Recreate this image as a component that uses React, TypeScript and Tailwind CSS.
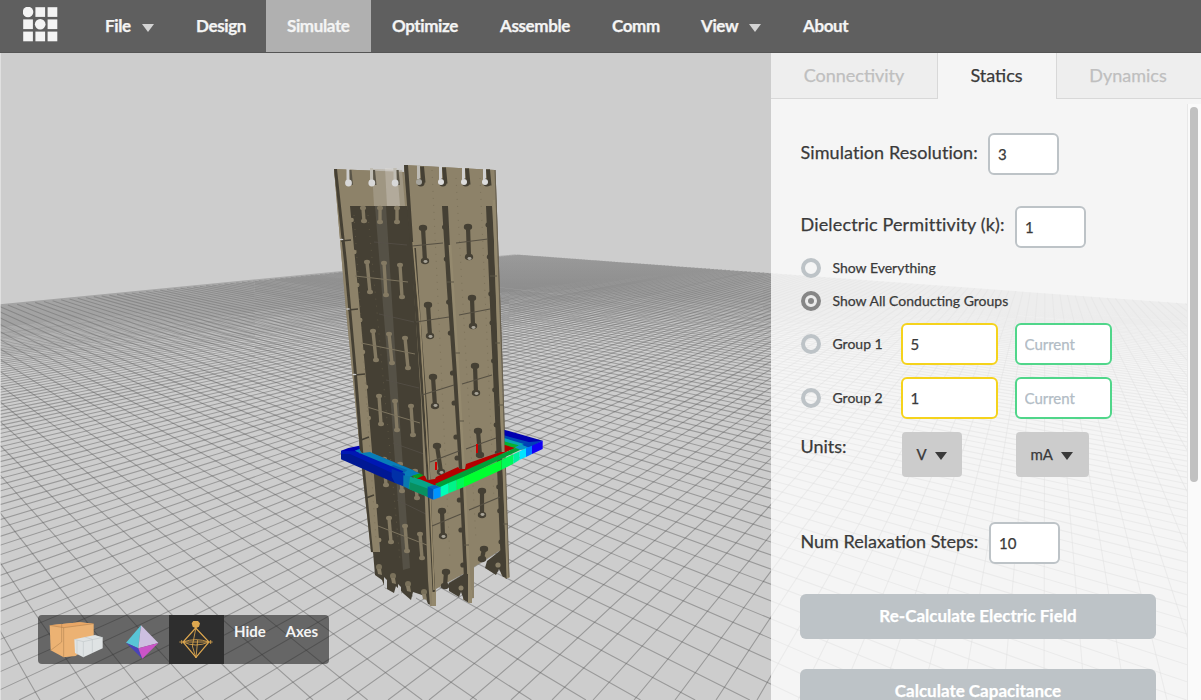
import React from "react";

type Pt = [number, number];

/* ---------- ground grid in perspective ---------- */
const CORNER: Pt = [519, 255];
const VP_RIGHT: Pt = [1045, 203.5];
const VP_LEFT: Pt = [-250, 199];
const BASE = 700;

/* Where the line a-b crosses the line c-d */
function cross(a: Pt, b: Pt, c: Pt, d: Pt): Pt {
  const r: Pt = [b[0] - a[0], b[1] - a[1]];
  const s: Pt = [d[0] - c[0], d[1] - c[1]];
  const den = r[0] * s[1] - r[1] * s[0];
  const t = ((c[0] - a[0]) * s[1] - (c[1] - a[1]) * s[0]) / den;
  return [a[0] + t * r[0], a[1] + t * r[1]];
}

function segment(vp: Pt, edgeVp: Pt, x: number): string {
  const base: Pt = [x, BASE];
  const start = cross(vp, base, CORNER, edgeVp);
  return `M${start[0].toFixed(2)} ${start[1].toFixed(2)}L${x.toFixed(1)} ${BASE}`;
}

function family(vp: Pt, edgeVp: Pt, from: number, to: number, step: number): string {
  const out: string[] = [];
  for (let x = from; x < to; x += step) out.push(segment(vp, edgeVp, x));
  return out.join("");
}

const GRID_A = family(VP_RIGHT, VP_LEFT, 593 - 114 * 41, 1860, 41);
const GRID_B = family(VP_LEFT, VP_RIGHT, 40 - 4 * 54.6, 6640, 54.6);

/* ---------- tower ---------- */
const LIGHT = "#8d8269";
const DARK = "#454034";

function Bone({ a, b, fill, w = 3, r = 3 }: { a: Pt; b: Pt; fill: string; w?: number; r?: number }) {
  return (
    <g fill={fill} stroke={fill}>
      <line x1={a[0]} y1={a[1]} x2={b[0]} y2={b[1]} strokeWidth={w} />
      <ellipse cx={a[0]} cy={a[1]} rx={r} ry={r * 0.75} stroke="none" />
      <ellipse cx={b[0]} cy={b[1]} rx={r} ry={r * 0.75} stroke="none" />
    </g>
  );
}

const backBones: [Pt, Pt][] = [
  [[363, 208], [364, 221]], [[380, 208], [380, 222]], [[397, 208], [397, 222]],
  [[367, 262], [370, 292]], [[384, 263], [386, 295]], [[400, 265], [402, 297]],
  [[373, 331], [376, 360]], [[389, 334], [392, 363]], [[405, 338], [408, 368]],
  [[379, 396], [381, 424]], [[395, 401], [397, 430]], [[411, 406], [413, 435]],
  [[384, 459], [386, 485]], [[400, 464], [402, 491]], [[415, 471], [417, 498]],
  [[389, 518], [391, 542]], [[405, 526], [407, 551]], [[420, 534], [422, 558]],
];

const frontBones: [Pt, Pt][] = [
  [[423, 228], [425, 261]], [[428, 305], [430, 336]], [[433, 377], [435, 406]],
  [[437, 446], [441, 472]], [[442, 511], [443, 536]], [[446, 572], [445, 586]],
  [[468, 227], [469, 257]], [[472, 298], [473, 326]], [[475, 366], [476, 393]],
  [[478, 431], [480, 455]], [[482, 491], [482, 515]], [[484, 549], [482, 559]],
];

const frontHoles: Pt[] = [
  [425, 261], [469, 258], [430, 336], [473, 327], [435, 405], [476, 393], [441, 472], [443, 536], [482, 514],
];

function Tower() {
  return (
    <g>
      {/* back wall */}
      <polygon fill={LIGHT} points="334,169 404,172 410,215 360,215 364,290 373,390 380,554 371,552 360,450 346,310" />
      <polygon fill={DARK} points="334,169 337,169 347,262 357,375 363,450 373,552 371,552 360,450 352,350 344,262" />
      <polygon fill={DARK} points="350,206 408,206 418,300 426,450 434,590 434,606 428,604 425,596 413,592 411,600 404,594 398,588 396,586 394,593 385,588 382,580 375,575 373,552 380,552 376,500 367,390 358,290" />
      <polygon fill="#b5b0a2" opacity="0.45" points="372,169 402,170 405,206 374,206" />
      <polygon fill="#dddcd6" opacity="0.3" points="385,168 397,169 400,206 387,206" />
      <polygon fill="#5b574c" opacity="0.75" points="375,206 386,206 397,380 410,568 403,570 389,380" />
      {[0, 1, 2].map((i) => (
        <g key={i}>
          <path d={`M${346.5 + i * 23.5} 168 v13 h3 v-13z`} fill={i ? "#c0bdb4" : "#cdcdcd"} />
          <path d={`M${349.5 + i * 23.5} 170 h2 l1.500 15 h-3z`} fill="#5a5548" />
          <circle cx={348.5 + i * 23.3} cy={183} r="3.4" fill="#d8d8d8" />
        </g>
      ))}
      {backBones.map(([a, b], i) => (
        <Bone key={i} a={a} b={b} fill="#847a63" w={3.4} />
      ))}
      <g stroke="#7d745f" strokeWidth="1">
        <path d="M355 276L408 282M361 343L415 354M367 407L420 423M378 526L432 547" fill="none" />
      </g>
      <g stroke="#57524a" strokeWidth="0.7">
        <path d="M374 242L407 245M379 314L414 322M386 380L419 388M393 443L424 454M397 500L428 515" fill="none" />
      </g>
      <g stroke={DARK} strokeWidth="1.4">
        <path d="M341 241L351 240M348 310L358 309M355 375L365 374M361 440L369 437M366 498L374 495" fill="none" />
      </g>
      <g fill="#cdcdcd">
        <ellipse cx="341.500" cy="239.500" rx="2" ry="0.8" />
        <ellipse cx="348" cy="309" rx="2" ry="0.8" />
        <ellipse cx="354.500" cy="374.500" rx="2" ry="0.8" />
      </g>
      {[220, 252, 285, 320, 352, 387, 418, 470, 506, 540].map((y) => (
        <circle key={y} cx={350.5 + (y - 206) * 0.086} cy={y} r="2.2" fill={LIGHT} />
      ))}
      {[[379, 572], [393, 581], [408, 589], [424, 597]].map(([x, y]) => (
        <g key={x}>
          <ellipse cx={x} cy={y - 5} rx="3" ry="3" fill="#7a715b" />
          <path d={`M${x - 2} ${y - 3}h4l1 6l-4 -1z`} fill="#877d66" />
        </g>
      ))}
      <path d="M384 577l3 3v9l-3-2zM398 584l3 3v9l-3-2zM413 593l3 3v7l-3-2z" fill="#cacaca" />

      {/* front wall */}
      <polygon fill={LIGHT} points="404,165 495,170 497,240 502,380 505,460 509,577 506,579 501,574 499,551 474,567 474,598 463,600 463,574 436,589 436,606 430,606 428,580 421,400 411,245" />
      <polygon fill={DARK} points="404,165 408,165 413,240 423,380 430,500 435,590 433,600 427,480 421,390 410,244" />
      <path d="M415 248L420 322L427 420L434 590" stroke={DARK} strokeWidth="1.8" fill="none" />
      <path d="M413 242L420 322L429 470L434 590" stroke="#96896c" strokeWidth="1.5" fill="none" />
      <polygon fill={DARK} points="442,206 448,206 452,290 459,390 463,470 468,585 469,603 464,600 464,579 459,470 453,375 447,290" />
      <polygon fill={DARK} points="486,206 492,206 494,240 499,380 502,460 507,579 502,575 500,545 496,440 491,330" />
      <path d="M450 245L459 385L464 475L470 602" stroke="#94896e" strokeWidth="2.8" fill="none" />
      <path d="M494 200L500 380L504 465L508 578" stroke="#93886d" strokeWidth="2.8" fill="none" />
      <path d="M495 170L503 390L509 577" stroke="#696150" strokeWidth="1" fill="none" />
      <path d="M434 592V606" stroke="#93886d" strokeWidth="4" />
      <path d="M470 590V603" stroke="#93886d" strokeWidth="4" />
      <path d="M464 574L449 583V591L459 597L461 592L464 600H468V574zM501 550L487 561L485 568L496 575L499 569L503 577L506 577z" fill={DARK} />
      <circle cx="461" cy="588" r="2.5" fill="#8a8068" />
      <circle cx="498" cy="565" r="2.6" fill="#8a8068" />

      {[420, 442, 465, 486].map((x, i) => (
        <g key={x}>
          <path d={`M${x} ${166.5 + i}h4l1.500 16h-4z`} fill={DARK} />
          <path d={`M${x - 3} ${165 + i}h3v14h-3z`} fill={i ? "#d0d0d0" : "#bdbbb5"} />
          <circle cx={x + 0.8} cy={182.500} r="3.9" fill={DARK} />
          <circle cx={x - 1} cy={182} r="3" fill={i ? "#dddddd" : "#a7a59e"} />
        </g>
      ))}

      {frontBones.map(([a, b], i) => (
        <Bone key={i} a={a} b={b} fill={DARK} w={4.2} r={4.2} />
      ))}
      {frontHoles.map(([x, y], i) => (
        <ellipse key={i} cx={x + 0.5} cy={y + 0.5} rx="2" ry="1.4" fill="#a7a397" />
      ))}
      <path
        d="M412 246L443 243M416 322L449 317M422 395L454 385M430 462L459 451M432 526L461 514M456 243L488 239M459 315L490 309M462 384L492 375M466 449L496 438M469 510L500 497"
        stroke="#565043"
        strokeWidth="1.2"
        fill="none"
      />
      <g fill={DARK}>
        {[227, 259, 302, 333, 373, 403, 437, 458, 500, 530, 565].map((y) => (
          <circle key={y} cx={443.5 + (y - 206) * 0.054} cy={y} r="2.6" />
        ))}
        {[225, 257, 294, 323, 361, 390, 425, 453, 487, 511, 542].map((y) => (
          <circle key={y} cx={487 + (y - 206) * 0.041} cy={y} r="2.4" />
        ))}
      </g>
      <path d="M447 282h7M455 353h5M459 421h5M464 545h5M490 276h7M495 343h5M498 405h5M503 524h5" stroke="#5c5647" strokeWidth="1.2" />
      <g stroke="#6f664f" strokeWidth="0.8" strokeDasharray="1 6" opacity="0.7">
        <path d="M432 170L438 300L450 560M456 178L476 540M480 178L494 500M368 215L400 560M354 215L376 540" fill="none" />
      </g>
    </g>
  );
}

/* Field cross-section, drawn at three times its size */
function Ring() {
  return (
    <g transform="translate(320 380) scale(0.33333)">
      <polygon fill="#0000b0" points="552,149 668,182 640,196 552,168" />
      <polygon fill="#0048b4" points="552,166 640,190 618,206 552,176" />
      <polygon fill="#08a8b0" points="552,174 612,192 600,206 552,186" />
      <polygon fill="#08b030" points="552,184 596,196 575,212 552,204" />
      <polygon fill="#0000b4" points="63,212 85,204 125,196 132,214 105,222" />
      <polygon fill="#087cb8" points="104,212 124,205 310,278 262,293" />
      <polygon fill="#0864a8" points="220,255 262,270 240,288 200,268" />
      <polygon fill="#08a020" points="276,287 312,276 320,290 290,298" />
      <polygon fill="#b40000" points="290,296 345,270 430,240 555,195 585,204 345,318" />
      <polygon fill="#0018b4" points="63,212 105,214 250,274 238,292 63,228" />
      <polygon fill="#001894" points="63,222 90,222 225,283 225,309 63,238" />
      <polygon fill="#0030a8" points="215,266 255,281 250,319 225,309 215,290" />
      <polygon fill="#0878b0" points="250,286 276,291 268,328 250,319" />
      <polygon fill="#08a488" points="270,290 300,298 350,318 326,352 266,326" />
      <polygon fill="#089060" points="270,307 325,326 325,352 268,328" />
      <polygon fill="#00a038" points="345,312 585,204 608,206 362,326" />
      <polygon fill="#0898c8" points="585,201 608,194 630,203 600,210" />
      <polygon fill="#0040b8" points="606,194 630,186 668,182 630,204" />
      <polygon fill="#0868c0" points="323,320 345,315 362,322 340,332" />
      <polygon fill="#0054b4" points="323,320 340,328 340,359 323,352" />
      <polygon fill="#0094ff" points="340,328 362,320 362,351 340,359" />
      <polygon fill="#00ffb8" points="362,320 386,309 386,340 362,351" />
      <polygon fill="#00f488" points="386,309 410,299 410,330 386,340" />
      <polygon fill="#00f858" points="410,299 432,290 432,321 410,330" />
      <polygon fill="#00ff30" points="432,290 545,239 545,269 432,321" />
      <polygon fill="#00fa58" points="545,239 580,223 580,251 545,269" />
      <polygon fill="#00f0a0" points="580,223 599,214 599,239 580,251" />
      <polygon fill="#00e4ff" points="599,214 618,205 618,231 599,239" />
      <polygon fill="#0078ff" points="618,205 636,197 636,222 618,231" />
      <polygon fill="#1200f4" points="636,197 668,182 668,207 636,222" />
    </g>
  );
}

function Scene() {
  return (
    <svg className="absolute inset-0 h-full w-full" viewBox="0 0 1201 700" aria-hidden="true">
      <defs>
        <clipPath id="upper">
          <polygon points="320,100 520,100 505,380 504.500,452 500,452 466,464 465,469 460,469 458,467 436,477 435,479 427,480 425,476 413,470 370,452 362,453 320,400" />
        </clipPath>
        <linearGradient id="haze" gradientUnits="userSpaceOnUse" x1="0" y1="255" x2="0" y2="400">
          <stop offset="0" stopColor="#5c5c5c" stopOpacity="0.26" />
          <stop offset="0.3" stopColor="#5c5c5c" stopOpacity="0.36" />
          <stop offset="1" stopColor="#5c5c5c" stopOpacity="0.46" />
        </linearGradient>
      </defs>
      <rect width="1201" height="700" fill="#cdcdcd" />
      <path d={GRID_A} stroke="url(#haze)" strokeWidth="1.1" fill="none" />
      <path d={GRID_B} stroke="url(#haze)" strokeWidth="1.1" fill="none" />
      <Tower />
      <Ring />
      <g clipPath="url(#upper)">
        <Tower />
      </g>
      <g fill="#d00000">
        <rect x="435" y="462" width="2" height="8" />
        <rect x="476" y="444" width="2" height="9" />
      </g>
      <rect width="1" height="700" fill="#ededed" opacity="0.6" />
    </svg>
  );
}

/* ---------- navigation ---------- */
const Caret = ({ className }: { className: string }) => (
  <svg className={className} viewBox="0 0 12 8" fill="currentColor">
    <path d="M0 0h12L6 8z" />
  </svg>
);

function Logo() {
  const cells = [0, 1, 2].flatMap((r) => [0, 1, 2].map((c) => [r, c]));
  return (
    <svg className="h-[35px] w-[35px]" viewBox="0 0 35 35" fill="#f4f4f4">
      {cells.map(([r, c]) =>
        (r === 0 && c === 0) || (r === 1 && c === 1) ? (
          <circle key={`${r}${c}`} cx={5 + c * 12.2} cy={5 + r * 12.2} r="5.3" />
        ) : (
          <rect key={`${r}${c}`} x={0.2 + c * 12.2} y={0.2 + r * 12.2} width="9.7" height="9.7" />
        ),
      )}
    </svg>
  );
}

const navItems = [
  { label: "File", box: "w-[91px]", menu: true },
  { label: "Design", box: "w-[91px]" },
  { label: "Simulate", box: "w-[105px]", active: true },
  { label: "Optimize", box: "w-[108px]" },
  { label: "Assemble", box: "w-[112px]" },
  { label: "Comm", box: "w-[89px]" },
  { label: "View", box: "w-[102px]", menu: true },
  { label: "About", box: "w-[90px]" },
];

function NavBar() {
  return (
    <header className="flex h-[53px] shrink-0 border-b border-[#555555] bg-[#5f5f5f] text-[17px] font-bold tracking-[-0.38px] text-[#f4f4f4] [-webkit-text-stroke:0.25px]">
      <div className="w-[84px] pt-[7px] pl-[23px]">
        <Logo />
      </div>
      <nav className="flex h-[52px]">
        {navItems.map((n) => (
          <a
            key={n.label}
            className={`flex items-center pl-[21px] ${n.box} ${n.active ? "bg-[#b0b0b0]" : ""}`}
          >
            <span>{n.label}</span>
            {n.menu && <Caret className="mt-[3px] ml-[11px] h-2 w-3 text-[#d4d4d4]" />}
          </a>
        ))}
      </nav>
    </header>
  );
}

/* ---------- side panel ---------- */
function Field({ value, className, placeholder }: { value?: string; className: string; placeholder?: string }) {
  return (
    <input
      defaultValue={value}
      placeholder={placeholder}
      className={`h-[42px] rounded-md border-2 bg-white px-2 text-[15px] text-[#3a3a3a] outline-none placeholder:text-[#b2bcc5] ${className}`}
    />
  );
}

function Radio({ checked = false }: { checked?: boolean }) {
  return (
    <span
      className={`flex size-5 shrink-0 items-center justify-center rounded-full border-4 ${
        checked ? "border-[#868686]" : "border-[#bdc3c7]"
      }`}
    >
      {checked && <span className="size-1.5 rounded-full bg-[#868686]" />}
    </span>
  );
}

function GroupRow({ label, value }: { label: string; value: string }) {
  return (
    <div className="flex h-[54px] shrink-0 items-center">
      <Radio />
      <span className="ml-3 w-[68px] text-sm">{label}</span>
      <Field value={value} className="w-[97px] border-[#f5d31c]" />
      <Field placeholder="Current" className="ml-[17px] w-[97px] border-[#50d68a]" />
    </div>
  );
}

function Panel() {
  return (
    <aside className="flex w-[430px] shrink-0 flex-col bg-white/80 text-[#3a3a3a] [-webkit-text-stroke:0.25px]">
      <div className="flex h-[46px] shrink-0 text-lg">
        <div className="flex w-[167px] justify-center border-r border-b border-[#d8d8d8] bg-[#eeeeee] pt-[8px] text-[#bfbfbf]">
          Connectivity
        </div>
        <div className="flex w-[118px] justify-center pt-[8px] pr-[1px]">Statics</div>
        <div className="flex flex-1 justify-center border-b border-l border-[#d8d8d8] bg-[#eeeeee] pt-[8px] pr-[2px] text-[#bfbfbf]">
          Dynamics
        </div>
      </div>
      <div className="flex min-h-0 flex-1 pt-[5px]">
        <div className="flex w-[416px] flex-col overflow-hidden pr-[31px] pl-[29.5px] text-lg">
          <div className="mt-[29px] flex h-[43px] shrink-0">
            <span className="w-[187.5px] pt-[5px] tracking-[0.08px]">Simulation Resolution:</span>
            <Field value="3" className="w-[71px] border-[#bdc3c7]" />
          </div>
          <div className="mt-[30px] flex h-[43px] shrink-0">
            <span className="w-[214.5px] pt-[4px] tracking-[0.16px]">Dielectric Permittivity (k):</span>
            <Field value="1" className="w-[71px] border-[#bdc3c7]" />
          </div>
          <div className="mt-[2px] flex h-[33px] shrink-0 items-center text-sm">
            <Radio />
            <span className="ml-3">Show Everything</span>
          </div>
          <div className="flex h-[33px] shrink-0 items-center text-sm">
            <Radio checked />
            <span className="ml-3">Show All Conducting Groups</span>
          </div>
          <GroupRow label="Group 1" value="5" />
          <GroupRow label="Group 2" value="1" />
          <div className="mt-[7px] flex h-[45px] shrink-0">
            <span className="w-[101px]">Units:</span>
            <button className="flex h-[45px] w-[60px] items-center rounded bg-[#cccccc] pl-[15px] text-[15px]">
              V
              <Caret className="mt-0.5 ml-2 h-2 w-3" />
            </button>
            <button className="ml-[54px] flex h-[45px] w-[73px] items-center rounded bg-[#cccccc] pl-[15px] text-[15px]">
              mA
              <Caret className="mt-0.5 ml-2 h-2 w-3" />
            </button>
          </div>
          <div className="mt-[45px] flex h-[42px] shrink-0">
            <span className="w-[188.5px] pt-[5px]">Num Relaxation Steps:</span>
            <Field value="10" className="w-[71px] border-[#bdc3c7]" />
          </div>
          <button className="mt-[30px] -ml-[0.5px] h-[45px] w-[356px] shrink-0 rounded-md bg-[#bdc3c7] text-[17px] font-bold text-white">
            Re-Calculate Electric Field
          </button>
          <button className="mt-[30px] -ml-[0.5px] h-[45px] w-[356px] shrink-0 rounded-md bg-[#bdc3c7] text-[17px] font-bold text-white">
            Calculate Capacitance
          </button>
        </div>
        <div className="w-[14px] border-l border-[#e8e8e8] bg-[#fafafa] pt-[3px] pl-[2px]">
          <div className="h-[375px] w-2 rounded-full bg-[#c1c1c1]" />
        </div>
      </div>
    </aside>
  );
}

/* ---------- bottom toolbar ---------- */
function Toolbar() {
  return (
    <div className="flex h-[49px] w-[291px] overflow-hidden rounded bg-[#222222]/60 text-[15px] font-bold text-[#f4f4f4]">
      <div className="w-[77px] pt-[7px] pl-[11px]">
        <svg className="h-[38px] w-[56px]" viewBox="0 0 168 114">
          <path d="M2 10L92 1L134 5V60L80 102L44 106L5 85z" fill="#ecb273" />
          <path d="M2 10L44 17L134 5L92 1z" fill="#e9a766" />
          <path d="M2 10L44 17V106M44 17L134 5M38 5V60L5 85" stroke="#a97c4c" strokeWidth="1.5" fill="none" />
          <path d="M76 52L138 39L161 46V79L103 106L78 93z" fill="#dfe3e4" />
          <path d="M76 52L103 59V106M103 59L161 46M107 45L130 52V92M84 55V98" stroke="#b9c0c2" strokeWidth="1.5" fill="none" />
        </svg>
      </div>
      <div className="w-[54px] pt-[10px] pl-[10px]">
        <svg className="h-[34px] w-[34px]" viewBox="0 0 102 102">
          <path d="M48 1L3 53L40 70z" fill="#58c5d6" />
          <path d="M48 1L40 70L100 54z" fill="#cdbfe0" />
          <path d="M3 53L40 70L52 101z" fill="#4a44b8" />
          <path d="M40 70L100 54L52 101z" fill="#cb54c8" />
        </svg>
      </div>
      <div className="w-[55px] bg-[#2e2e2e] pt-[5px] pl-[10px]">
        <svg className="h-[40px] w-[35px]" viewBox="0 0 105 120" fill="none" stroke="#dda74f" strokeWidth="3">
          <path d="M43 3h14l6 7l-3 10l-10 5l-9-5l-3-10z" fill="#dda74f" stroke="none" />
          <path d="M50 24L12 66L51 112L90 66L50 24" strokeWidth="3.5" />
          <path d="M51 22L40 78L51 114L56 60M1 66H101M12 66Q50 52 90 66M12 66Q50 84 90 66" strokeWidth="2.5" />
          <path d="M8 60V72M95 60V72" strokeWidth="2.5" />
        </svg>
      </div>
      <span className="w-[51.5px] pt-[5px] pl-[10px]">Hide</span>
      <span className="pt-[5px] pl-[10px]">Axes</span>
    </div>
  );
}

export default function App() {
  return (
    <div className="relative flex h-[700px] w-[1201px] flex-col overflow-hidden font-['Lato',sans-serif]">
      <Scene />
      <div className="relative flex min-h-0 flex-1 flex-col">
        <NavBar />
        <div className="flex min-h-0 flex-1">
          <main className="flex flex-1 items-end pb-[36px] pl-[38px]">
            <Toolbar />
          </main>
          <Panel />
        </div>
      </div>
    </div>
  );
}
